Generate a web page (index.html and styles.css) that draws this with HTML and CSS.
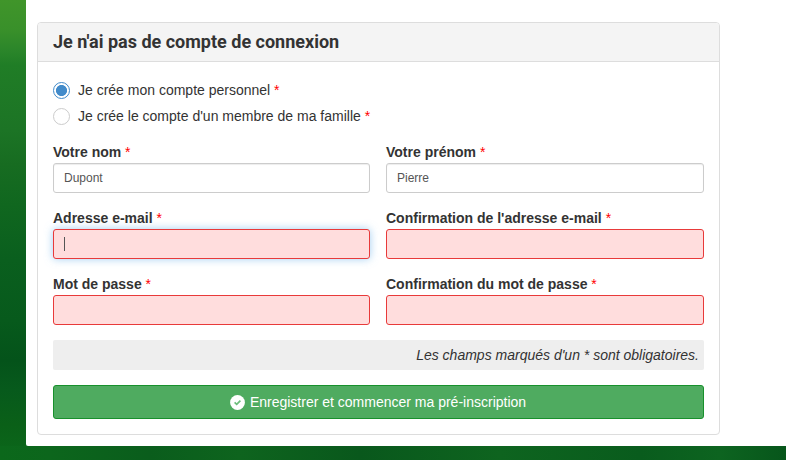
FILE: index.html
```html
<!DOCTYPE html>
<html lang="fr">
<head>
    <meta charset="UTF-8">
    <meta name="viewport" content="width=device-width, initial-scale=1.0">
    <title>Pré-inscription</title>
    <link rel="stylesheet" href="styles.css">
</head>
<body>
    <div class="container">
        <form class="panel">
            <div class="panel-heading">
                <h3 class="panel-title">Je n'ai pas de compte de connexion</h3>
            </div>
            <div class="panel-body">
                <div class="radio-group">
                    <label class="radio">
                        <input type="radio" name="account" checked>
                        <span>Je crée mon compte personnel <span class="required">*</span></span>
                    </label>
                    <label class="radio">
                        <input type="radio" name="account">
                        <span>Je crée le compte d'un membre de ma famille <span class="required">*</span></span>
                    </label>
                </div>
                <div class="fields">
                    <div class="form-group">
                        <label for="nom">Votre nom <span class="required">*</span></label>
                        <input type="text" id="nom" class="form-control" value="Dupont">
                    </div>
                    <div class="form-group">
                        <label for="prenom">Votre prénom <span class="required">*</span></label>
                        <input type="text" id="prenom" class="form-control" value="Pierre">
                    </div>
                    <div class="form-group caret">
                        <label for="email">Adresse e-mail <span class="required">*</span></label>
                        <input type="text" id="email" class="form-control error focused">
                    </div>
                    <div class="form-group">
                        <label for="email2">Confirmation de l'adresse e-mail <span class="required">*</span></label>
                        <input type="text" id="email2" class="form-control error">
                    </div>
                    <div class="form-group">
                        <label for="password">Mot de passe <span class="required">*</span></label>
                        <input type="password" id="password" class="form-control error">
                    </div>
                    <div class="form-group">
                        <label for="password2">Confirmation du mot de passe <span class="required">*</span></label>
                        <input type="password" id="password2" class="form-control error">
                    </div>
                </div>
                <div class="notice">Les champs marqués d'un * sont obligatoires.</div>
                <button type="button" class="btn-submit">
                    <svg class="icon" viewBox="0 0 15 15">
                        <circle cx="7.5" cy="7.5" r="7.4" fill="#fff"/>
                        <path d="M4.6 7.3l2.1 2 3.7-3.7" fill="none" stroke="#6cbd7b" stroke-width="1.7"/>
                    </svg>
                    <span>Enregistrer et commencer ma pré-inscription</span>
                </button>
            </div>
        </form>
    </div>
</body>
</html>
```

FILE: styles.css
```css
* {
    box-sizing: border-box;
}

body {
    margin: 0;
    height: 460px;
    overflow: hidden;
    padding-left: 26px;
    font-family: "Liberation Sans", Arial, sans-serif;
    font-size: 14px;
    line-height: 20px;
    color: #333;
    background:
        linear-gradient(90deg, #0b681b 0, #0c661c 50px, #0a5d1c 150px, #0e641e 240px, #09581c 360px, #0e641f 500px, #095c1d 640px, #0d6420 720px, #07561b 786px) 0 446px / 100% 14px no-repeat,
        linear-gradient(#40952a 0, #39902a 30px, #2b862a 50px, #207d26 65px, #1c7425 130px, #176c21 165px, #10671f 205px, #0a5f1e 260px, #075a1c 320px, #04531a 360px, #075a1c 390px, #0a6018 425px, #0b681b 460px);
}

.container {
    height: 446px;
    padding: 22px 66px 11px 11px;
    background: #fff;
    border-bottom-left-radius: 2px;
}

.panel {
    margin: 0;
    height: 413px;
    border: 1px solid #ddd;
    border-radius: 4px;
}

.panel-heading {
    height: 39px;
    padding: 9px 15px;
    background: #f4f4f4;
    border-bottom: 1px solid #ddd;
    border-radius: 3px 3px 0 0;
}

.panel-title {
    margin: 0;
    font-family: Roboto, sans-serif;
    font-size: 18px;
    font-weight: 700;
    line-height: 20px;
}

.panel-body {
    padding: 15px;
}

.radio-group {
    padding-top: 3px;
    margin-bottom: 16px;
}

.radio {
    display: flex;
    gap: 8px;
    height: 20px;
}

.radio + .radio {
    margin-top: 6px;
}

.radio input {
    appearance: none;
    width: 17px;
    height: 17px;
    margin: 2px 0 0;
    border: 1px solid #ccc;
    border-radius: 50%;
    background: #fff;
}

.radio input:checked {
    border-color: #428bca;
    background: radial-gradient(circle, #428bca 5.2px, #fff 5.9px);
}

.required {
    color: #f00;
    font-weight: 400;
}

.fields {
    display: grid;
    grid-template-columns: 317px 318px;
    gap: 15px 16px;
}

.form-group label {
    display: block;
    margin-bottom: 1px;
    font-weight: 700;
}

.form-control {
    display: block;
    width: 100%;
    height: 30px;
    padding: 5px 10px;
    border: 1px solid #ccc;
    border-radius: 3px;
    font-family: inherit;
    font-size: 12px;
    line-height: 18px;
    color: #555;
    background: #fff;
    box-shadow: inset 0 1px 1px rgba(0, 0, 0, 0.075);
}

.form-control.error {
    border-color: #e83a3a;
    background: #fdd;
    box-shadow: none;
}

.form-control.focused {
    box-shadow: 0 0 8px rgba(102, 175, 233, 0.6);
}

.caret {
    position: relative;
}

.caret::after {
    content: "";
    position: absolute;
    left: 11px;
    bottom: 8px;
    width: 1px;
    height: 14px;
    background: #555;
}

.notice {
    height: 30px;
    margin: 15px 0;
    padding: 5px;
    border-radius: 2px;
    background: #eee;
    font-style: italic;
    text-align: right;
}

.btn-submit {
    display: flex;
    justify-content: center;
    align-items: center;
    gap: 5px;
    width: 100%;
    height: 34px;
    padding: 6px 12px;
    border: 1px solid #18902c;
    border-radius: 3px;
    background: #4fab60;
    color: #fff;
    font-family: inherit;
    font-size: 14px;
    line-height: 20px;
}

.icon {
    width: 15px;
    height: 15px;
    margin-left: -1px;
}
```
